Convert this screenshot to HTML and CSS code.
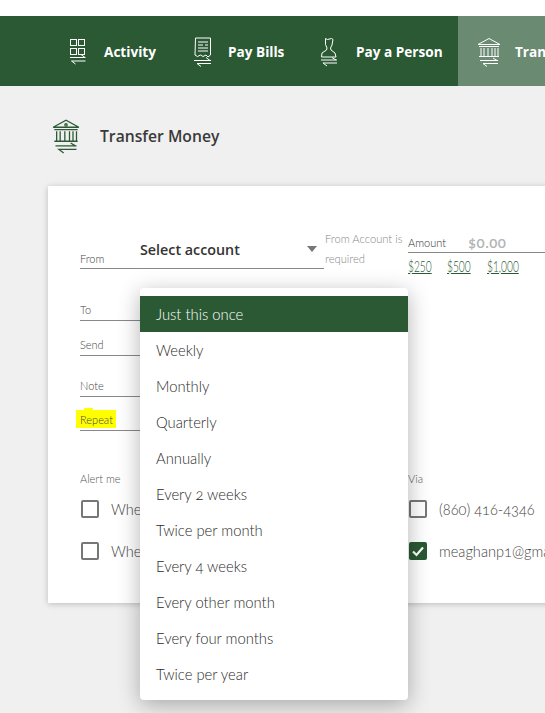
FILE: index.html
```html
<!DOCTYPE html>
<html lang="en">
<head>
  <meta charset="UTF-8" />
  <meta name="viewport" content="width=device-width, initial-scale=1.0" />
  <title>Transfer Money</title>
  <link rel="stylesheet" href="styles.css">
</head>
<body>
  <nav class="nav">
    <a class="nav-item nav-activity">
      <svg class="nav-icon" width="18" height="28" viewBox="0 0 18 28" fill="none" stroke="currentColor">
        <rect x="1.500" y="1.500" width="6" height="6" /><rect x="9.500" y="1.500" width="6" height="6" />
        <rect x="1.500" y="10.500" width="6" height="6" /><rect x="9.500" y="10.500" width="6" height="6" />
        <path d="M1 19.500h15.500M12 16.500l4 3M16.500 23H2.500l4 3" />
      </svg>
      <span>Activity</span>
    </a>
    <a class="nav-item nav-bills">
      <svg class="nav-icon" width="20" height="30" viewBox="0 0 20 30" fill="none" stroke="currentColor">
        <path d="M2.500 1h15v17l-2.500 2-2-2-3 1.500-2.500-1.500-3 1.500-2.500-1.500z" />
        <path d="M5 5h10M5 8h5M12 8h3M5 11h10M5 14h10" />
        <path d="M1 23.500h17M13 20.500l4 3M18 26.500H4l4 3" />
      </svg>
      <span>Pay Bills</span>
    </a>
    <a class="nav-item nav-person">
      <svg class="nav-icon" width="18" height="30" viewBox="0 0 18 30" fill="none" stroke="currentColor">
        <path d="M5.500 1.500l2 1 4-1 1.500 1-1 5.500-1.500 3 .5 2 4 3 1 4H1.500l.5-4 4.500-3 .5-2-1.500-3.500z" />
        <path d="M1 23h16M12 20.500l4 2.500M17 26H3l4 3" />
      </svg>
      <span>Pay a Person</span>
    </a>
    <a class="nav-item nav-transfer">
      <svg class="nav-icon" width="24" height="30" viewBox="0 0 24 30" fill="none" stroke="currentColor">
        <path d="M1 7.500 12 1.500l11 6zM2 9.500h20M4 11v8M7 11v8M11 11v8M15 11v8M18 11v8M21 11v8M2 19.500h20" />
        <path d="M3 23.500h18M16 21l4 2.500M21 26.500H6l4 3" />
      </svg>
      <span>Transfer Money</span>
    </a>
  </nav>

  <header class="page-title">
    <svg width="28" height="36" viewBox="0 0 24 30" fill="none" stroke="#2a5934" stroke-width="1.100">
      <path d="M1 7.500 12 1.500l11 6zM2 9.500h20M4 11v8M7 11v8M11 11v8M15 11v8M18 11v8M21 11v8M2 19.500h20" />
      <circle cx="12" cy="5.500" r="1" />
      <path d="M3 23.500h18M16 21l4 2.500M21 26.500H6l4 3" />
    </svg>
    <h1>Transfer Money</h1>
  </header>

  <main class="card">
    <div class="row-from">
      <div class="field field-from">
        <label class="field-label">From</label>
        <span class="select-value">Select account</span>
        <span class="caret"></span>
      </div>
      <p class="field-error">From Account is required</p>
      <div class="amount">
        <div class="amount-field">
          <label class="amount-label">Amount</label>
          <span class="amount-value">$0.00</span>
        </div>
        <div class="quick-amounts"><a class="q1">$250</a><a class="q2">$500</a><a class="q3">$1,000</a></div>
      </div>
    </div>

    <div class="field field-to">
      <label class="field-label">To</label>
      <span class="to-error">To Account is required</span>
    </div>
    <div class="field field-send"><label class="field-label">Send</label></div>
    <div class="field field-note"><label class="field-label">Note</label></div>
    <div class="field field-repeat"><label class="field-label highlight">Repeat</label></div>

    <div class="alerts">
      <div class="alert-col">
        <div class="field-label alert-title">Alert me</div>
        <div class="check-row"><span class="check"></span><span>When</span></div>
        <div class="check-row"><span class="check"></span><span>When</span></div>
      </div>
      <div class="alert-col via">
        <div class="field-label alert-title">Via</div>
        <div class="check-row"><span class="check"></span><span>(860) 416-4346</span></div>
        <div class="check-row">
          <span class="check checked">
            <svg width="18" height="18" viewBox="0 0 18 18" fill="none" stroke="#fff" stroke-width="2.200"><path d="M4 9.500l3.500 3.500L14 5.500" /></svg>
          </span>
          <span>meaghanp1@gmail.com</span>
        </div>
      </div>
    </div>
  </main>

  <ul class="menu">
    <li class="selected">Just this once</li>
    <li>Weekly</li>
    <li>Monthly</li>
    <li>Quarterly</li>
    <li>Annually</li>
    <li>Every 2 weeks</li>
    <li>Twice per month</li>
    <li>Every 4 weeks</li>
    <li>Every other month</li>
    <li>Every four months</li>
    <li>Twice per year</li>
  </ul>
</body>
</html>
```

FILE: styles.css
```css
html, body {
  height: 713px;
}
body {
  margin: 0;
  background: #f0f0f0;
  font-family: 'Open Sans', sans-serif;
  color: #3a3a3a;
  overflow: hidden;
  position: relative;
  width: 545px;
}
.nav {
  display: flex;
  margin-top: 16px;
  height: 70px;
  width: 700px;
  padding-left: 69px;
  background: #2a5934;
  box-sizing: border-box;
  box-shadow: 0 -16px 0 #fff;
}
.nav-item {
  display: flex;
  align-items: center;
  color: #fff;
  font-weight: 700;
  font-size: 13.6px;
}
.nav-icon {
  margin-right: 17px;
  margin-top: 2px;
}
.nav-activity { width: 124px; }
.nav-bills { width: 127px; }
.nav-person { width: 138px; }
.nav-transfer {
  background: #6a8a72;
  width: 200px;
  padding-left: 19px;
}
.nav-bills .nav-icon { margin-right: 15px; }
.nav-person .nav-icon { margin-right: 18px; }
.nav-transfer .nav-icon { margin-right: 14px; }
.page-title {
  display: flex;
  align-items: center;
  gap: 20px;
  margin: 31px 0 0 52px;
  height: 38px;
}
.page-title h1 {
  margin: 0;
  font-size: 15.7px;
  font-weight: 600;
  color: #3a3a3a;
}
.card {
  margin: 31px 0 0 48px;
  width: 600px;
  height: 417px;
  background: #fff;
  box-shadow: 0 1px 6px rgba(0, 0, 0, 0.22);
  padding: 0 0 0 32px;
  box-sizing: border-box;
}
.row-from {
  display: flex;
  padding-top: 46px;
}
.field {
  position: relative;
  width: 244px;
  padding-bottom: 3px;
  border-bottom: 1px solid #888;
  box-sizing: border-box;
  display: flex;
  align-items: flex-end;
}
.field-label {
  font-family: 'Lato', sans-serif;
  font-size: 11px;
  font-weight: 300;
  color: #444;
  line-height: 14px;
}
.field-from {
  height: 37px;
  padding-bottom: 2px;
}
.select-value {
  position: absolute;
  left: 60px;
  top: 8px;
  font-size: 14.3px;
  font-weight: 600;
  line-height: 19px;
  color: #333;
}
.caret {
  position: absolute;
  right: 7px;
  top: 14px;
  border: 5px solid transparent;
  border-top: 6px solid #777;
  border-bottom: 0;
}
.field-error {
  width: 84px;
  margin: -3px 0 0;
  font-family: 'Lato', sans-serif;
  font-size: 11.2px;
  font-weight: 300;
  line-height: 20px;
  color: #888;
  padding-left: 1px;
  box-sizing: border-box;
}
.to-error {
  position: absolute;
  left: 252px;
  top: -17px;
  width: 76px;
  font-family: 'Lato', sans-serif;
  font-size: 11.2px;
  font-weight: 300;
  line-height: 20px;
  color: #888;
}
.amount {
  flex: none;
  width: 137px;
}
.amount-field {
  display: flex;
  align-items: baseline;
  height: 20px;
  border-bottom: 1px solid #888;
}
.amount-label {
  width: 60px;
  font-family: 'Lato', sans-serif;
  font-size: 11px;
  font-weight: 300;
  color: #333;
}
.amount-value {
  position: relative;
  top: 1px;
  font-family: 'Lato', sans-serif;
  font-size: 15px;
  font-weight: 600;
  letter-spacing: 0.5px;
  font-variant-numeric: oldstyle-nums;
  color: #b4b4b4;
}
.quick-amounts {
  display: flex;
  margin-top: 4px;
}
.quick-amounts a {
  font-family: 'Lato', sans-serif;
  font-size: 15px;
  font-weight: 300;
  color: #2a5934;
  text-decoration: underline;
  transform: scaleX(0.68);
  transform-origin: left;
  white-space: nowrap;
}
.quick-amounts .q1 { width: 39px; }
.quick-amounts .q2 { width: 40px; }
.quick-amounts .q3 { width: 29px; }
.field-to { height: 18px; margin-top: 28px; }
.field-send { height: 18px; margin-top: 17px; }
.field-note { height: 18px; margin-top: 23px; }
.field-repeat { height: 18px; margin-top: 16px; }
.highlight {
  position: relative;
  z-index: 0;
}
.highlight::before {
  content: "";
  position: absolute;
  z-index: -1;
  left: -4px;
  right: -3px;
  top: -3px;
  bottom: -1px;
  background: #ffff00;
}
.highlight::after {
  content: "";
  position: absolute;
  z-index: -1;
  left: 4px;
  width: 9px;
  top: -5px;
  height: 3px;
  background: #ffff00;
}
.alerts {
  display: flex;
  margin-top: 41px;
}
.alert-col {
  flex: none;
  width: 328px;
}
.alert-title {
  color: #555;
  margin-bottom: 14px;
}
.check-row {
  display: flex;
  align-items: center;
  gap: 12px;
  height: 18px;
  margin: 0 0 24px 1px;
  font-family: 'Lato', sans-serif;
  font-size: 14.6px;
  font-weight: 300;
  font-variant-numeric: oldstyle-nums;
  color: #444;
  white-space: nowrap;
}
.check {
  width: 18px;
  height: 18px;
  box-sizing: border-box;
  border: 2px solid #777;
  border-radius: 2px;
  flex: none;
}
.check.checked {
  background: #2a5934;
  border: 0;
}
.check svg { display: block; }
.via .check-row { margin-left: 1px; }
.menu {
  position: absolute;
  left: 140px;
  top: 288px;
  width: 268px;
  margin: 0;
  padding: 8px 0;
  list-style: none;
  background: #fff;
  border-radius: 4px;
  box-shadow: 0 5px 22px rgba(0, 0, 0, 0.3);
  box-sizing: border-box;
  height: 412px;
}
.menu li {
  height: 36px;
  line-height: 37px;
  padding-left: 16px;
  font-family: 'Lato', sans-serif;
  font-size: 14.8px;
  font-weight: 300;
  font-variant-numeric: oldstyle-nums;
  color: #2a2a2a;
}
.menu li.selected {
  background: #2a5934;
  color: #fff;
}
```
